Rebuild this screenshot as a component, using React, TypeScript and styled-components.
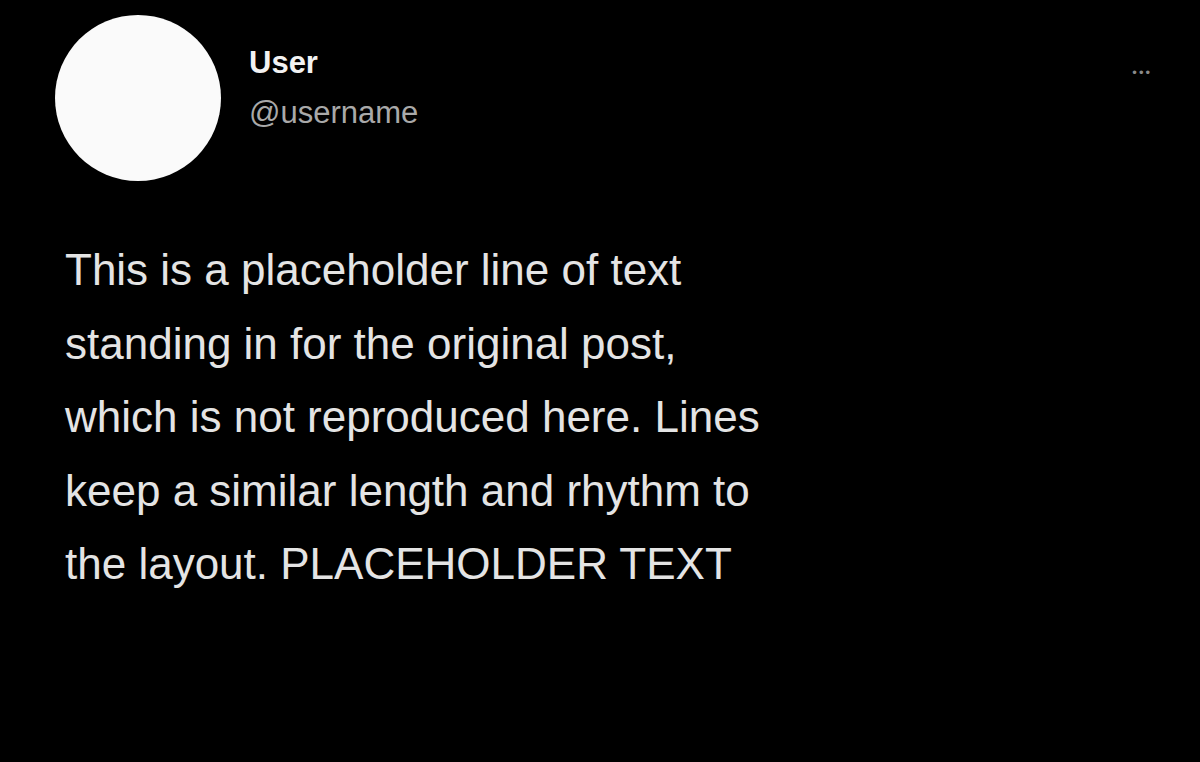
import styled, { createGlobalStyle } from "styled-components";

const GlobalStyle = createGlobalStyle`
  html, body {
    margin: 0;
    padding: 0;
    background: #000;
  }
  body {
    font-family: "Liberation Sans", Arial, sans-serif;
  }
`;

// placeholder copy in place of the original post text
const lines = [
  "This is a placeholder line of text",
  "standing in for the original post,",
  "which is not reproduced here. Lines",
  "keep a similar length and rhythm to",
  "the layout. PLACEHOLDER TEXT",
];

export default function App() {
  return (
    <>
      <GlobalStyle />
      <Page>
        <Header>
          <Avatar />
          <Names>
            <DisplayName>User</DisplayName>
            <Handle>@username</Handle>
          </Names>
          <More>•••</More>
        </Header>
        <Body>
          {lines.map((l) => (
            <Line key={l}>{l}</Line>
          ))}
        </Body>
      </Page>
    </>
  );
}

const Page = styled.main`
  width: 1200px;
  height: 762px;
  background: #000;
  box-sizing: border-box;
  padding: 15px 0 0 0;
  overflow: hidden;
`;

const Header = styled.header`
  display: flex;
  align-items: flex-start;
  padding-left: 55px;
  padding-right: 48px;
`;

const Avatar = styled.div`
  width: 166px;
  height: 166px;
  border-radius: 50%;
  background: #fafafa;
  flex-shrink: 0;
`;

const Names = styled.div`
  display: flex;
  flex-direction: column;
  margin-left: 28px;
  margin-top: 30px;
  row-gap: 14px;
`;

const DisplayName = styled.div`
  color: #f2f2f2;
  font-weight: 700;
  font-size: 31px;
`;

const Handle = styled.div`
  color: #a9a9a9;
  font-size: 31px;
`;

const More = styled.div`
  margin-left: auto;
  margin-top: 50px;
  color: #8a8a8a;
  font-size: 13px;
  letter-spacing: 2px;
`;

const Body = styled.section`
  display: flex;
  flex-direction: column;
  padding-left: 65px;
  margin-top: 52px;
`;

const Line = styled.p`
  margin: 0;
  color: #e4e4e4;
  font-size: 44px;
  line-height: 73.5px;
`;
